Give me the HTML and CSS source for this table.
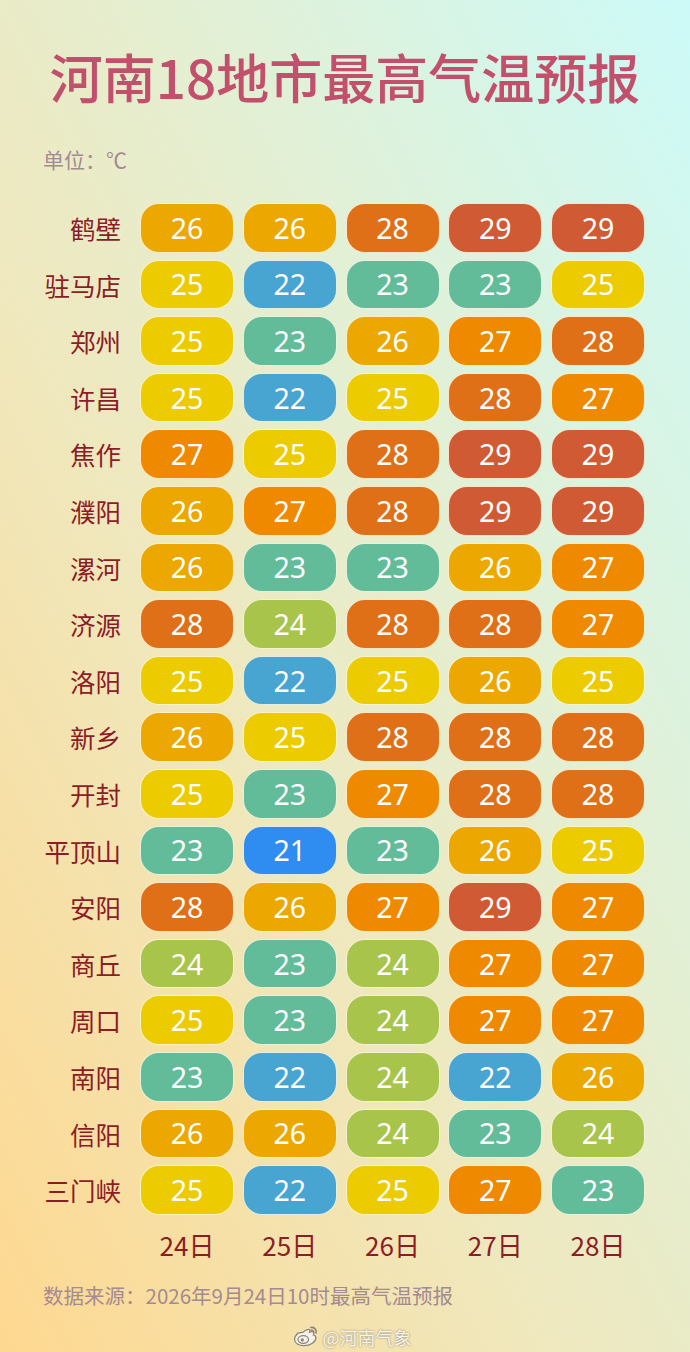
FILE: index.html
```html
<!DOCTYPE html>
<html lang="zh-CN">
<head>
    <meta charset="UTF-8">
    <meta name="viewport" content="width=device-width, initial-scale=1.0">
    <title>河南18地市最高气温预报</title>
    <link rel="stylesheet" href="styles.css">
</head>
<body>
    <div class="page">
        <h1 class="title">河南18地市最高气温预报</h1>
        <div class="unit">单位：℃</div>

        <div class="table" id="table">
            <!-- rows are built by the script below -->
        </div>

        <div class="dates">
            <span>24日</span>
            <span>25日</span>
            <span>26日</span>
            <span>27日</span>
            <span>28日</span>
        </div>

        <div class="source">数据来源：2026年9月24日10时最高气温预报</div>

        <div class="watermark">
            <svg class="weibo" viewBox="0 0 24 20" width="28" height="23">
                <path d="M9.6 6.2c2.6-2.4 5-2.9 5.6-1.9.3.5.2 1.3-.1 2 1.6-.6 3.2-.5 3.6.5.3.6.1 1.3-.3 1.9 1.3.3 2.2 1.2 2.2 2.6 0 3.2-4.6 6.6-10.3 6.6-4.5 0-8.3-2.1-8.3-5.2 0-1.7 1.1-3.8 3.1-5.7z" fill="#f6f2ea" stroke="#8a8478" stroke-width="1.1"/>
                <ellipse cx="9.6" cy="12.6" rx="4.6" ry="3.3" fill="none" stroke="#8a8478" stroke-width="1.1"/>
                <circle cx="8.8" cy="13" r="1.4" fill="#8a8478"/>
                <path d="M16.2 2.2c2.6-.6 5.2 1.6 4.6 4.6" fill="none" stroke="#8a8478" stroke-width="1.4" stroke-linecap="round"/>
                <path d="M16.6 4.6c1.2-.2 2.3.8 2.1 2" fill="none" stroke="#8a8478" stroke-width="1.2" stroke-linecap="round"/>
            </svg>
            <span>@河南气象</span>
        </div>
    </div>

    <script>
        const table = document.getElementById('table');

        // City name and the five daily highs, 24th to 28th
        const cities = [
            ['鹤壁', [26, 26, 28, 29, 29]],
            ['驻马店', [25, 22, 23, 23, 25]],
            ['郑州', [25, 23, 26, 27, 28]],
            ['许昌', [25, 22, 25, 28, 27]],
            ['焦作', [27, 25, 28, 29, 29]],
            ['濮阳', [26, 27, 28, 29, 29]],
            ['漯河', [26, 23, 23, 26, 27]],
            ['济源', [28, 24, 28, 28, 27]],
            ['洛阳', [25, 22, 25, 26, 25]],
            ['新乡', [26, 25, 28, 28, 28]],
            ['开封', [25, 23, 27, 28, 28]],
            ['平顶山', [23, 21, 23, 26, 25]],
            ['安阳', [28, 26, 27, 29, 27]],
            ['商丘', [24, 23, 24, 27, 27]],
            ['周口', [25, 23, 24, 27, 27]],
            ['南阳', [23, 22, 24, 22, 26]],
            ['信阳', [26, 26, 24, 23, 24]],
            ['三门峡', [25, 22, 25, 27, 23]]
        ];

        cities.forEach(([name, temps]) => {
            const row = document.createElement('div');
            row.classList.add('row');
            row.innerHTML = `
                <div class="city">${name}</div>
                ${temps.map(t => `<div class="cell t${t}">${t}</div>`).join('')}
            `;
            table.appendChild(row);
        });
    </script>
</body>
</html>
```

FILE: styles.css
```css
body {
    margin: 0;
    padding: 0;
    font-family: "Noto Sans CJK SC", "Noto Sans", sans-serif;
}

.page {
    width: 690px;
    height: 1352px;
    box-sizing: border-box;
    padding-top: 50px;
    background: linear-gradient(to top right, #fed890 0%, #efe8be 40%, #e4efd2 62%, #ccfaf8 100%);
    overflow: hidden;
}

.title {
    margin: 0;
    text-align: center;
    font-size: 53px;
    line-height: 1;
    font-weight: 500;
    color: #c2506c;
}

.unit {
    margin: 46px 0 0 43px;
    font-size: 21px;
    line-height: 1;
    color: #a48a92;
}

.table {
    margin-top: 33px;
}

.row {
    display: grid;
    grid-template-columns: 131.25px repeat(5, 94px);
    column-gap: 8.75px;
    align-items: center;
    height: 49.6px;
    margin-bottom: 7px;
}

.city {
    padding-right: 10.25px;
    text-align: right;
    font-size: 25.5px;
    line-height: 1;
    color: #8c1c26;
}

.cell {
    height: 49.6px;
    box-sizing: border-box;
    border: 1.5px solid rgba(255, 252, 230, 0.85);
    border-radius: 19px;
    display: flex;
    align-items: center;
    justify-content: center;
    font-family: "Noto Sans", sans-serif;
    font-size: 28.5px;
    font-weight: 400;
    color: #fff;
}

.t21 { background-color: #2f8cf0; }
.t22 { background-color: #48a4d0; }
.t23 { background-color: #62bc9a; }
.t24 { background-color: #a8c44a; }
.t25 { background-color: #eccb00; }
.t26 { background-color: #eca800; }
.t27 { background-color: #ee8900; }
.t28 { background-color: #e07018; }
.t29 { background-color: #d05a34; }

.dates {
    display: grid;
    grid-template-columns: repeat(5, 94px);
    column-gap: 8.75px;
    padding-left: 140px;
    margin-top: 17px;
}

.dates span {
    text-align: center;
    font-size: 26px;
    line-height: 1;
    color: #8c1c26;
}

.source {
    margin: 27px 0 0 43px;
    font-size: 20.5px;
    line-height: 1;
    color: #a48a92;
}

.watermark {
    display: flex;
    justify-content: center;
    align-items: center;
    gap: 2px;
    margin-top: 20px;
    padding-left: 14px;
    font-size: 18px;
    line-height: 1;
    color: #f8f4ec;
    text-shadow: 0 0 2px rgba(90, 80, 70, 0.75);
}
```
